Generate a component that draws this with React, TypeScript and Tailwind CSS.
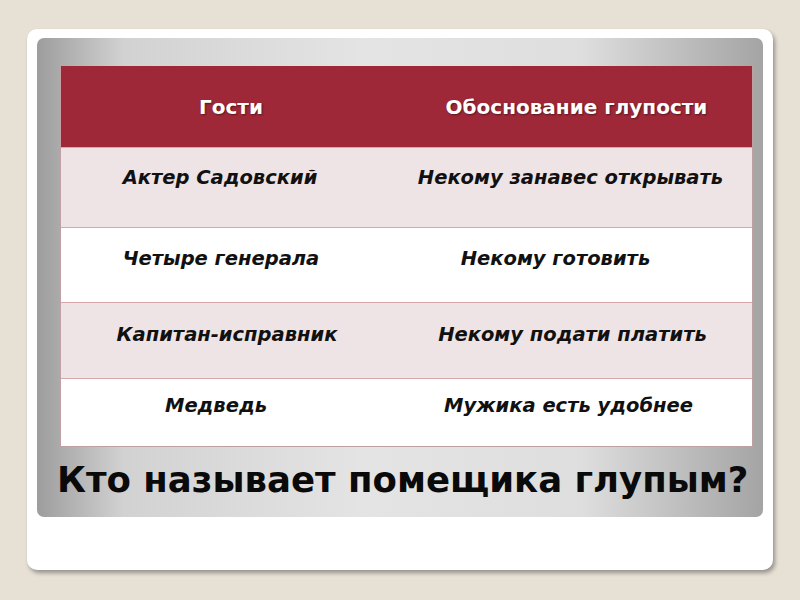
const rows = [
  { a: 'Актер Садовский', b: 'Некому занавес открывать', h: 'h-[80px]', pt: 'pt-[15px]', bg: 'bg-[#efe4e5]', ca: 'pr-[22px]', cb: 'pr-[12px]' },
  { a: 'Четыре генерала', b: 'Некому готовить', h: 'h-[75px]', pt: 'pt-[16px]', bg: 'bg-white', ca: 'pr-[20px]', cb: 'pr-[42px]' },
  { a: 'Капитан-исправник', b: 'Некому подати платить', h: 'h-[76px]', pt: 'pt-[17px]', bg: 'bg-[#efe4e5]', ca: 'pr-[8px]', cb: 'pr-[8px]' },
  { a: 'Медведь', b: 'Мужика есть удобнее', h: 'h-[68px]', pt: 'pt-[12px]', bg: 'bg-white', ca: 'pr-[30px]', cb: 'pr-[16px]' },
];

export default function App() {
  return (
    <div
      className="w-[800px] h-[600px] bg-[#e6e0d5] pt-[29px] px-[27px]"
      style={{ fontFamily: '"DejaVu Sans", Verdana, sans-serif' }}
    >
      <div className="h-[541px] rounded-[10px] bg-white pt-[9px] px-[10px] shadow-[2px_3px_4px_rgba(0,0,0,0.35)]">
        <div className="h-[479px] rounded-[7px] bg-[linear-gradient(90deg,#9d9d9d_0%,#d2d2d2_12%,#e4e4e4_45%,#dedede_75%,#a4a4a4_100%)] pt-[28px] pl-[23px] pr-[10px]">
          <div className="border-x border-b border-[#bfa0a4]">
            <div className="grid grid-cols-[340px_1fr] h-[81px] bg-[#9e2838] text-white text-[20px] font-bold items-center [text-shadow:1px_1px_2px_rgba(0,0,0,0.45)]">
              <div className="text-center">Гости</div>
              <div className="text-center">Обоснование глупости</div>
            </div>
            {rows.map((r) => (
              <div
                key={r.a}
                className={`grid grid-cols-[340px_1fr] border-t border-[#d8a6ab] ${r.h} ${r.pt} ${r.bg} text-[19.5px] font-bold italic text-[#111]`}
              >
                <div className={`text-center ${r.ca}`}>{r.a}</div>
                <div className={`text-center ${r.cb}`}>{r.b}</div>
              </div>
            ))}
          </div>
          <div className="mt-[6px] -ml-[3px] -mr-[10px] whitespace-nowrap text-[35.5px] font-bold text-[#0a0a0a]">
            Кто называет помещика глупым?
          </div>
        </div>
      </div>
    </div>
  );
}
